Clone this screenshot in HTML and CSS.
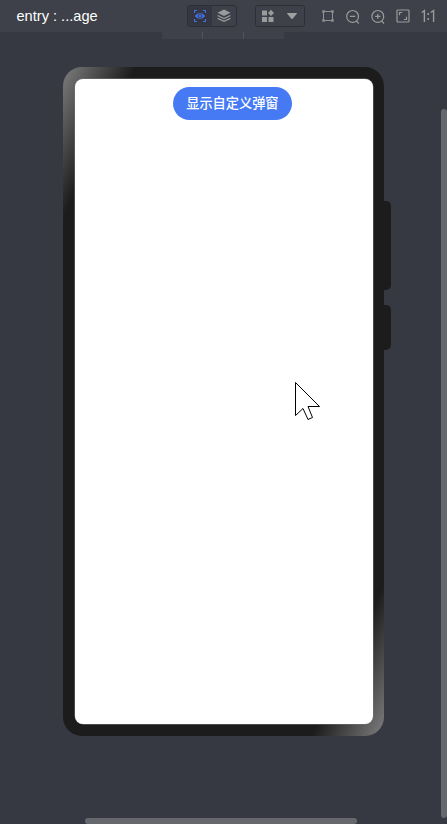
FILE: index.html
```
<!DOCTYPE html>
<html lang="zh">
<head>
<meta charset="utf-8">
<title>Previewer</title>
<link rel="stylesheet" href="styles.css">
</head>
<body>
<header class="toolbar">
  <span class="title">entry : ...age</span>
  <div class="group modes">
    <span class="tool active">
      <svg width="14" height="14" viewBox="0 0 14 14" fill="none" stroke="#4474ee"><path d="M1.500 4V1.500H4M10 1.500h2.500V4M12.500 10v2.500H10M4 12.500H1.500V10"/><path d="M1.800 7Q7 .8 12.200 7Q7 13.200 1.800 7Z" fill="#4474ee" stroke="none"/><circle cx="7" cy="7" r="1.900" fill="#4474ee" stroke="#30343e" stroke-width=".9"/></svg>
    </span>
    <span class="tool">
      <svg width="14" height="14" viewBox="0 0 14 14" fill="none" stroke="#9b9b9c" stroke-width="1.300"><path d="M7 .5L13.500 3.800L7 7.100L.5 3.800Z" fill="#9b9b9c" stroke="none"/><path d="M.7 6.500L7 9.500L13.300 6.500M.7 9.300L7 12.300L13.300 9.300"/></svg>
    </span>
  </div>
  <div class="group views">
    <span class="tool">
      <svg width="14" height="14" viewBox="0 0 14 14" fill="#9b9b9c"><rect x="1" y="1.500" width="5" height="5" rx=".6"/><rect x="1" y="8" width="5" height="5" rx=".6"/><rect x="7.500" y="8" width="5" height="5" rx=".6"/><path d="M10 .8L13 3.900L10 7L7 3.900Z"/></svg>
    </span>
    <span class="tool">
      <svg width="12" height="8" viewBox="0 0 12 8" fill="#a0a0a0"><path d="M1.500 1H10.500Q11.500 1 10.800 1.800L6.600 6.700Q6 7.300 5.400 6.700L1.200 1.800Q.5 1 1.500 1Z"/></svg>
    </span>
  </div>
  <div class="actions">
    <svg width="14" height="14" viewBox="0 0 14 14" fill="none" stroke="#929293"><path d="M2.500 2.500h9v9h-9Z"/><path d="M1.300 1.300h2.400v2.400H1.300ZM10.300 1.300h2.400v2.400H10.300ZM1.300 10.300h2.400v2.400H1.300ZM10.300 10.300h2.400v2.400H10.300Z" fill="#929293" stroke="none"/></svg>
    <svg width="14" height="15" viewBox="0 0 14 15" fill="none" stroke="#9b9b9c" stroke-width="1.200"><circle cx="6.600" cy="7.400" r="5.900"/><path d="M3.900 7.400h5.400M10.300 11.900L12.800 14.500"/></svg>
    <svg width="14" height="15" viewBox="0 0 14 15" fill="none" stroke="#9b9b9c" stroke-width="1.200"><circle cx="6.800" cy="7.400" r="5.900"/><path d="M4.100 7.400h5.400M6.800 4.700v5.400M10.500 11.900L13 14.500"/></svg>
    <svg width="14" height="14" viewBox="0 0 14 14" fill="none" stroke="#9b9b9c" stroke-width="1.200"><rect x="1" y="1" width="12" height="12" rx=".8"/><path d="M3.500 6.200V3.500H6.200M10.500 7.800v2.700H7.800"/></svg>
    <svg width="15" height="14" viewBox="0 0 15 14" fill="none" stroke="#9b9b9c" stroke-width="1.400"><path d="M.8 3.500L3.400 1.600V13M9.700 3.500L12.600 1.600V13"/><path d="M7.200 4v2M7.200 9v2" stroke-width="1.500"/></svg>
  </div>
</header>
<main class="stage">
  <div class="tabs"><i></i><i></i><i></i></div>
  <div class="device">
    <div class="screen">
      <button class="dialog-button">显示自定义弹窗</button>
    </div>
    <span class="key volume"></span>
    <span class="key power"></span>
    <svg class="cursor" width="28" height="40" viewBox="0 0 28 40" fill="#fff" stroke="#000"><path d="M1.500 1.500V34.500L9 27.500L14 38.500L18.500 36.500L14 25.500H25.500Z"/></svg>
  </div>
  <span class="scroll vertical"></span>
  <span class="scroll horizontal"></span>
</main>
</body>
</html>
```
FILE: styles.css
```
* { box-sizing: border-box; }
body {
  margin: 0;
  height: 824px;
  display: flex;
  flex-direction: column;
  overflow: hidden;
  background: #363942;
  font-family: "Liberation Sans", "Noto Sans CJK SC", sans-serif;
}
svg { display: block; flex: none; }
.toolbar {
  height: 32px;
  flex: none;
  display: flex;
  align-items: center;
  background: #3e4149;
}
.title {
  width: 170.9px;
  margin-left: 16.5px;
  color: #fff;
  font-size: 14.6px;
  line-height: 20px;
  white-space: nowrap;
}
.group {
  width: 50px;
  height: 22px;
  flex: none;
  display: flex;
  border: 1px solid #2d2f35;
  border-radius: 3px;
  overflow: hidden;
}
.views { margin-left: 18px; }
.tool {
  flex: 1;
  display: flex;
  align-items: center;
  justify-content: center;
}
.active { background: #343741; }
.actions {
  width: 115px;
  margin-left: 15.6px;
  display: flex;
  flex: none;
  align-items: center;
  justify-content: space-between;
}
.stage {
  position: relative;
  flex: 1;
}
.tabs {
  width: 122px;
  height: 7px;
  margin-left: 162px;
  display: flex;
  background: #3e4149;
}
.tabs i { flex: 1; }
.tabs i + i { border-left: 1px solid #52545a; }
.device {
  position: relative;
  width: 321.3px;
  height: 669px;
  margin: 28px 0 0 63px;
  padding: 12px 11.5px 12px 12px;
  border-radius: 19px;
  background: linear-gradient(to bottom right, #7e7e7e 0%, #1c1c1c 11.3%, #1c1c1c 88.7%, #7e7e7e 100%);
}
.screen {
  height: 645px;
  padding-top: 8px;
  display: flex;
  justify-content: center;
  align-items: flex-start;
  border-radius: 8px;
  background: #fff;
  box-shadow: 0 0 0 .5px #777;
}
.dialog-button {
  width: 119.5px;
  height: 33px;
  margin-left: 17px;
  padding: 0;
  border: 0;
  border-radius: 17px;
  background: #467af5;
  color: #fff;
  font: 500 13.2px/31px "Noto Sans CJK SC", sans-serif;
  padding-bottom: 2px;
  white-space: nowrap;
}
.key {
  position: absolute;
  left: 321px;
  width: 6.5px;
  border-radius: 0 5px 5px 0;
  background: #1c1c1c;
}
.volume { top: 134px; height: 89px; }
.power { top: 238px; height: 45px; }
.cursor {
  position: absolute;
  left: 231px;
  top: 314px;
}
.scroll {
  position: absolute;
  background: #67686d;
  border-radius: 3px;
}
.vertical { right: 0; top: 77px; width: 6px; height: 709px; }
.horizontal { left: 85px; bottom: 0; width: 272px; height: 6px; }
```
